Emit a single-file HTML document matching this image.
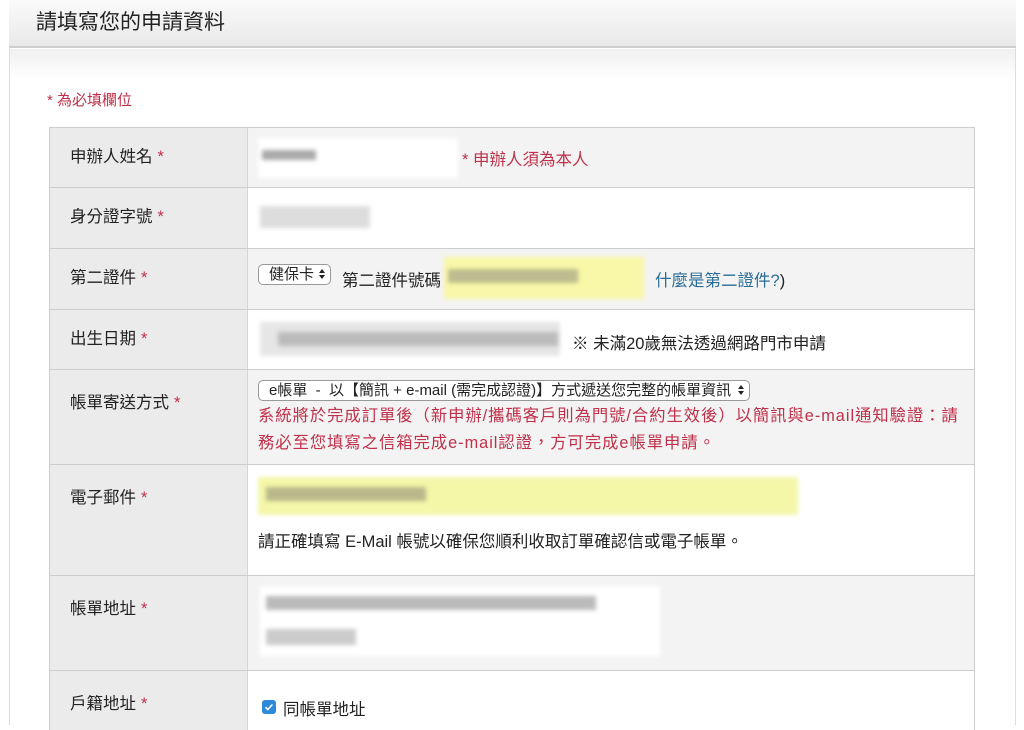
<!DOCTYPE html>
<html><head><meta charset="utf-8">
<style>
*{margin:0;padding:0;box-sizing:border-box}
body{width:1024px;height:725px;overflow:hidden;background:#fff;font-family:"Liberation Sans","Noto Sans CJK TC",sans-serif;color:#222;position:relative}
.panel{position:absolute;left:9px;top:0;width:1007px;height:725px;border-left:1px solid #ddd;border-right:1px solid #ddd;background:#fff}
.hdr{position:absolute;left:9px;top:0;width:1007px;height:48px;background:linear-gradient(#fafafa,#e9e9e9);border-bottom:2px solid #cfcfcf;font-size:21px;line-height:46px;padding-left:27px;color:#222}
.shadow{position:absolute;left:10px;top:49px;width:1005px;height:30px;background:linear-gradient(#f0f0f0,#fff)}
.req{position:absolute;left:47px;top:89px;font-size:15px;color:#c0304a}
.row{position:absolute;left:49px;width:926px;border-top:1px solid #cdcdcd}
.lab{position:absolute;left:0;top:0;bottom:0;width:199px;background:#ebebeb;border-left:1px solid #cdcdcd;border-right:1px solid #d5d5d5;font-size:16.5px;padding-left:20px}
.lab b{color:#c0304a;font-weight:normal;margin-left:5px}
.val{position:absolute;left:199px;right:0;top:0;bottom:0;border-right:1px solid #cdcdcd;font-size:16.5px}
.g{background:#f3f3f3}.w{background:#fff}
.blur{position:absolute;filter:blur(2px)}
.sel{position:absolute;border:1px solid #999;border-radius:5px;background:#fff;font-size:15px;padding:0 16px 0 10px;height:21px;line-height:19px;white-space:nowrap}
.sel:after{content:"";position:absolute;right:5px;top:4px;width:0;height:0;border-left:3px solid transparent;border-right:3px solid transparent;border-bottom:4px solid #222}
.sel:before{content:"";position:absolute;right:5px;top:10px;width:0;height:0;border-left:3px solid transparent;border-right:3px solid transparent;border-top:4px solid #222}
.red{color:#c0304a}
</style></head><body>
<div class="panel"></div>
<div class="hdr">請填寫您的申請資料</div>
<div class="shadow"></div>
<div class="req">* 為必填欄位</div>

<div class="row" style="top:127px;height:60px"><div class="lab" style="line-height:58px">申辦人姓名<b>*</b></div>
<div class="val g"><div class="blur" style="left:10px;top:10px;width:200px;height:40px;background:#fff"></div><div class="blur" style="left:14px;top:22px;width:54px;height:10px;background:#aaa"></div><span class="red" style="position:absolute;left:214px;top:18px">* 申辦人須為本人</span></div></div>

<div class="row" style="top:187px;height:61px"><div class="lab" style="line-height:58px">身分證字號<b>*</b></div>
<div class="val w"><div class="blur" style="left:12px;top:18px;width:110px;height:22px;background:#ddd"></div></div></div>

<div class="row" style="top:248px;height:61px"><div class="lab" style="line-height:58px">第二證件<b>*</b></div>
<div class="val g"><div class="sel" style="left:10px;top:15px">健保卡</div><span style="position:absolute;left:94px;top:18px">第二證件號碼</span><div class="blur" style="left:196px;top:8px;width:200px;height:42px;background:#f8f8a8"></div><div class="blur" style="left:200px;top:20px;width:130px;height:14px;background:#bcbc90"></div><span style="position:absolute;left:407px;top:18px;color:#2a6d95">什麼是第二證件?<span style="color:#222">)</span></span></div></div>

<div class="row" style="top:309px;height:60px"><div class="lab" style="line-height:58px">出生日期<b>*</b></div>
<div class="val w"><div class="blur" style="left:12px;top:12px;width:300px;height:34px;background:#e6e6e6"></div><div class="blur" style="left:30px;top:22px;width:280px;height:14px;background:#bbb"></div><span style="position:absolute;left:324px;top:20px">※ 未滿20歲無法透過網路門市申請</span></div></div>

<div class="row" style="top:369px;height:95px"><div class="lab" style="padding-top:19px">帳單寄送方式<b>*</b></div>
<div class="val g"><div class="sel" style="left:10px;top:10px;padding-left:10px;padding-right:18px">e帳單 &nbsp;- &nbsp;以【簡訊 + e-mail (需完成認證)】方式遞送您完整的帳單資訊</div><div class="red" style="position:absolute;left:10px;top:33px;font-size:16.3px;line-height:27px;width:720px;white-space:nowrap;letter-spacing:1px">系統將於完成訂單後（新申辦/攜碼客戶則為門號/合約生效後）以簡訊與e-mail通知驗證：請<br>務必至您填寫之信箱完成e-mail認證，方可完成e帳單申請。</div></div></div>

<div class="row" style="top:464px;height:111px"><div class="lab" style="padding-top:19px">電子郵件<b>*</b></div>
<div class="val w"><div class="blur" style="left:10px;top:12px;width:540px;height:38px;background:#f4f7a8"></div><div class="blur" style="left:18px;top:22px;width:160px;height:14px;background:#b8b88a"></div><span style="position:absolute;left:10px;top:63px">請正確填寫 E-Mail 帳號以確保您順利收取訂單確認信或電子帳單。</span></div></div>

<div class="row" style="top:575px;height:95px"><div class="lab" style="padding-top:19px">帳單地址<b>*</b></div>
<div class="val g"><div class="blur" style="left:12px;top:10px;width:400px;height:70px;background:#fff"></div><div class="blur" style="left:18px;top:20px;width:330px;height:14px;background:#bbb"></div><div class="blur" style="left:18px;top:53px;width:90px;height:16px;background:#ccc"></div></div></div>

<div class="row" style="top:670px;height:60px"><div class="lab" style="padding-top:19px">戶籍地址<b>*</b></div>
<div class="val w"><div style="position:absolute;left:14px;top:29px;width:14px;height:14px;border-radius:3px;background:#2d8ad8"><svg width="14" height="14" viewBox="0 0 14 14"><path d="M3.5 7.2l2.3 2.3 4.6-5" stroke="#fff" stroke-width="1.6" fill="none"/></svg></div><span style="position:absolute;left:35px;top:25px">同帳單地址</span></div></div>
</body></html>
